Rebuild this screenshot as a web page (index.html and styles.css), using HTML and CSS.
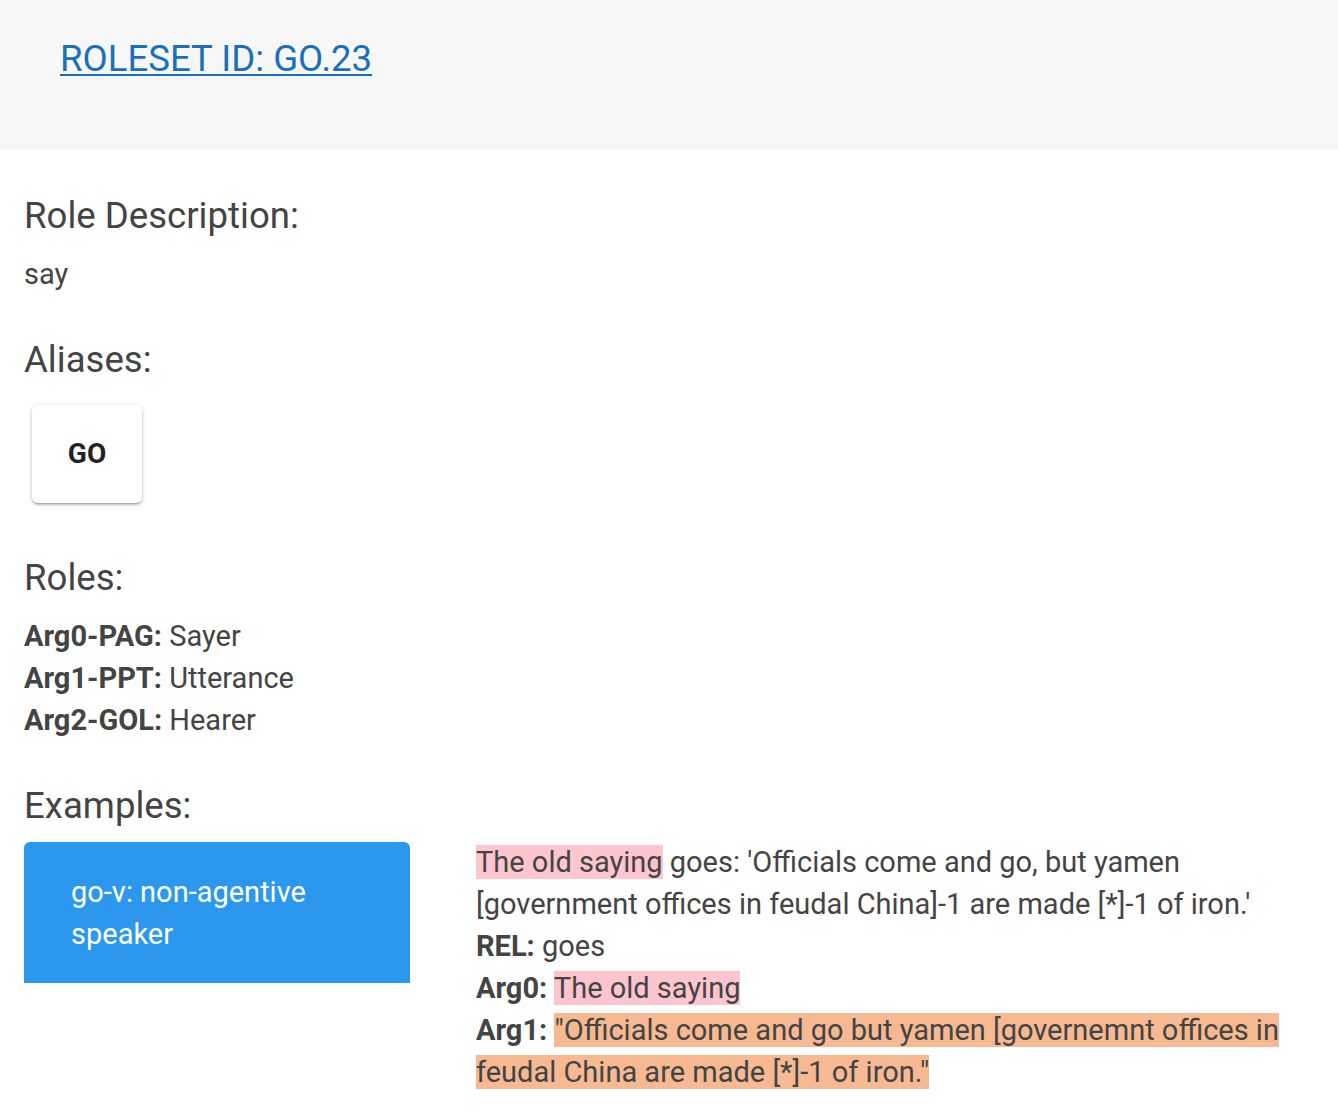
FILE: index.html
```html
<!DOCTYPE html>
<html lang="en">
<head>
<meta charset="utf-8">
<title>Roleset go.23</title>
<link rel="stylesheet" href="styles.css">
</head>
<body>
<header class="top">
  <a class="roleset-link" href="#">ROLESET ID: GO.23</a>
</header>
<main class="content">
  <h2 class="section-title">Role Description:</h2>
  <p class="text">say</p>

  <h2 class="section-title">Aliases:</h2>
  <div class="aliases">
    <div class="alias-card">GO</div>
  </div>

  <h2 class="section-title roles-title">Roles:</h2>
  <div class="roles">
    <div class="text"><b>Arg0-PAG:</b> Sayer</div>
    <div class="text"><b>Arg1-PPT:</b> Utterance</div>
    <div class="text"><b>Arg2-GOL:</b> Hearer</div>
  </div>

  <h2 class="section-title examples-title">Examples:</h2>
  <div class="examples">
    <div class="example-tab">go-v: non-agentive speaker</div>
    <div class="example-body">
      <div class="text"><span class="hl-arg0">The old saying</span> goes: 'Officials come and go, but yamen [government offices in feudal China]-1 are made [*]-1 of iron.'</div>
      <div class="text"><b>REL:</b> goes</div>
      <div class="text"><b>Arg0:</b> <span class="hl-arg0">The old saying</span></div>
      <div class="text"><b>Arg1:</b> <span class="hl-arg1">"Officials come and go but yamen [governemnt offices in feudal China are made [*]-1 of iron."</span></div>
    </div>
  </div>
</main>
</body>
</html>
```

FILE: styles.css
```css
* { box-sizing: border-box; }

html, body {
  margin: 0;
  padding: 0;
  background: #ffffff;
}

body {
  font-family: Roboto, "Noto Sans", "Liberation Sans", sans-serif;
  font-size: 29px;
  line-height: 42px;
  color: #444444;
}

.top {
  background: #f7f7f7;
  height: 150px;
  padding: 37px 0 0 60px;
}

.roleset-link {
  font-size: 36.6px;
  line-height: 44px;
  color: #1a70b8;
  text-decoration: underline;
  text-decoration-thickness: 2px;
  text-underline-offset: 3px;
}

.content {
  padding: 0 24px 20px 24px;
}

.section-title {
  font-size: 36.6px;
  line-height: 44px;
  font-weight: 400;
  color: #444444;
  margin: 43px 0 15px 0;
}

.content > .section-title:first-child {
  margin-top: 44px;
}

.roles-title {
  margin-top: 45px;
}

.examples-title {
  margin-bottom: 13px;
}

.text {
  margin: 0;
}

b {
  font-weight: 700;
}

.aliases {
  display: flex;
  padding: 8px;
  margin-top: 10px;
}

.alias-card {
  width: 110px;
  height: 98px;
  display: flex;
  align-items: center;
  justify-content: center;
  background: #ffffff;
  border-radius: 6px;
  font-size: 28px;
  font-weight: 700;
  color: #222222;
  box-shadow: 0 2px 2px 0 rgba(0,0,0,0.14), 0 3px 1px -2px rgba(0,0,0,0.12), 0 1px 5px 0 rgba(0,0,0,0.2);
}

.examples {
  display: grid;
  grid-template-columns: 386px 1fr;
  column-gap: 66px;
  align-items: start;
}

.example-tab {
  background: #2b98ee;
  color: #ffffff;
  border-radius: 6px 6px 0 0;
  padding: 29px 47px 28px 47px;
  margin-top: 1px;
}

.hl-arg0 {
  background: #fdc6cf;
}

.hl-arg1 {
  background: #f6b992;
}
```
